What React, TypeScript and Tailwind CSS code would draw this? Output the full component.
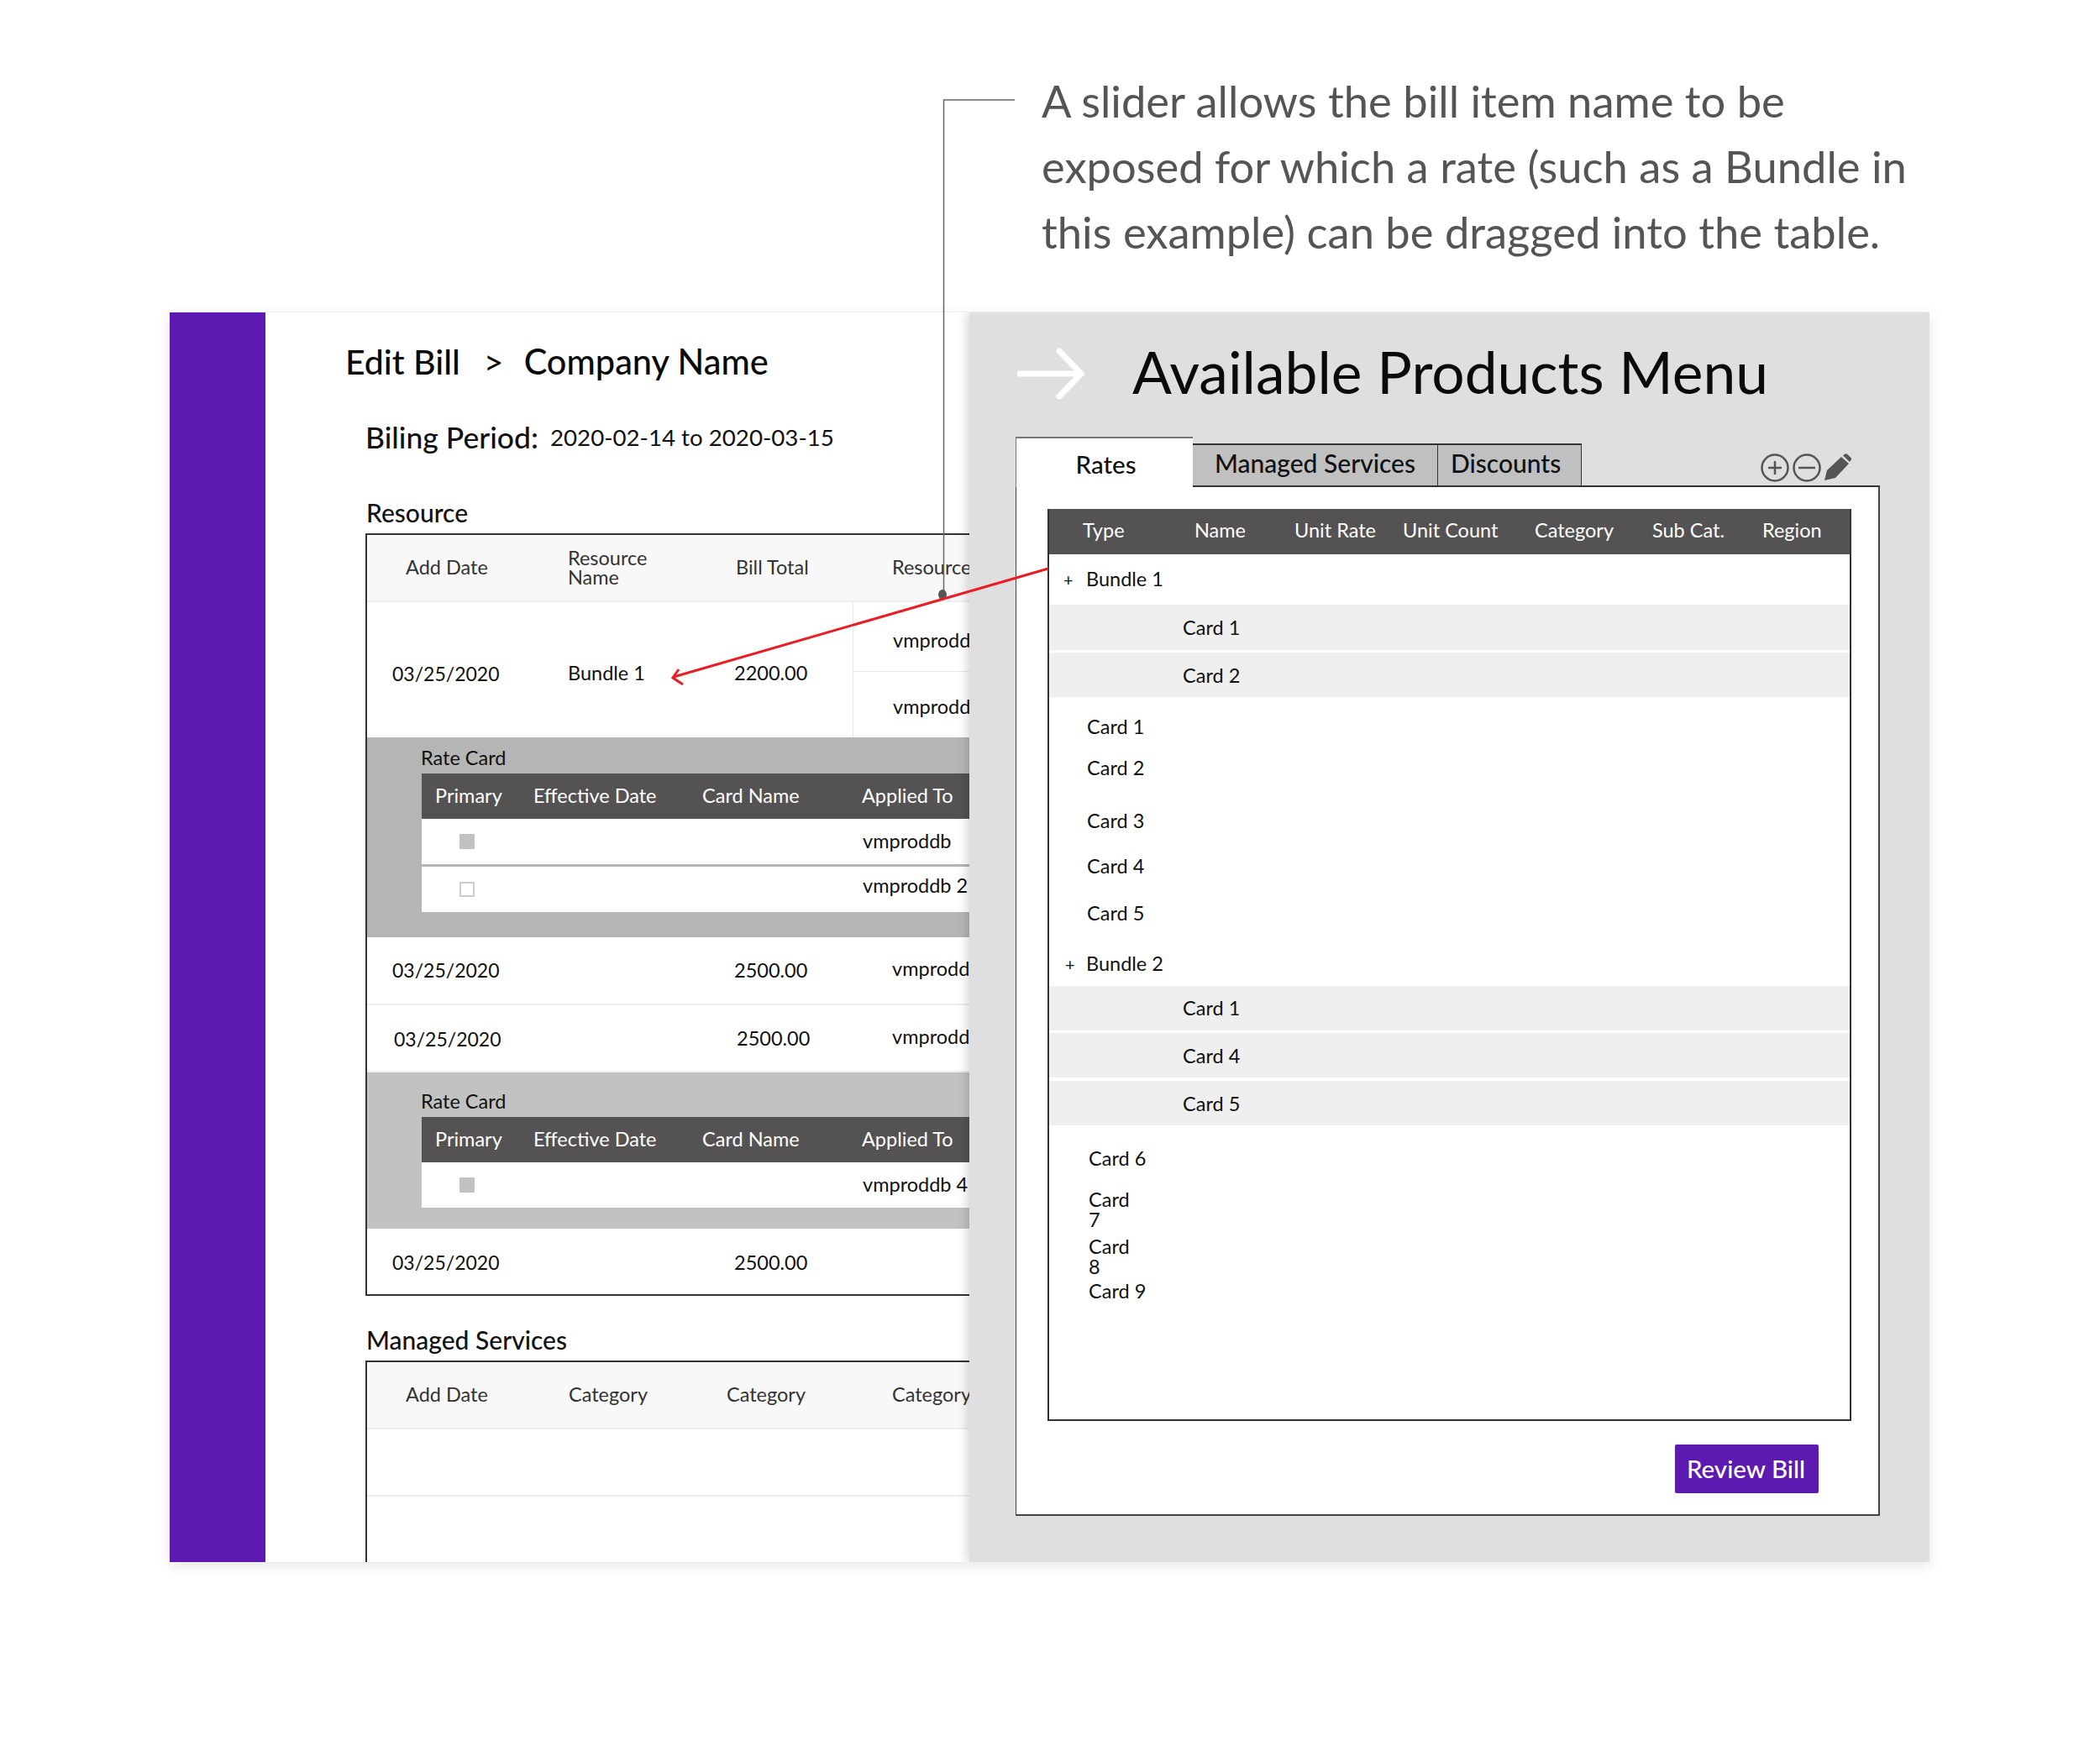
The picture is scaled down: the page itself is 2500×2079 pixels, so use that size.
const FONT = "font-['Lato','Liberation_Sans',sans-serif]";

const BillRow = ({ date, total, res, shift }: { date: string; total: string; res?: string; shift?: boolean }) => (
  <div className={`grid ${shift ? 'h-[80px]' : 'h-[81px]'} grid-cols-[239px_198px_141px_1fr] items-center border-b-2 border-[#eeeeee] text-[23px] text-[#111]`}>
    <div className={shift ? 'pl-[32px] pt-[2px]' : 'pl-[30px]'}>{date}</div>
    <div />
    <div className={`text-[23.5px] ${shift ? 'pl-[3px] pt-[2px]' : ''}`}>{total}</div>
    <div className={`whitespace-nowrap pl-[47px] text-[23.5px] ${shift ? 'pb-[2px]' : 'pb-[4px]'}`}>{res}</div>
  </div>
);

const RateCard = ({ bg, rows, pad, label }: { bg: string; rows: { label: string; checked: boolean }[]; pad: string; label: string }) => (
  <div className={`${bg} ${pad} pl-[65px]`}>
    <div className={`-ml-[1px] text-[23.5px] leading-[26px] text-[#111] ${label}`}>Rate Card</div>
    <div className="grid h-[54px] grid-cols-[133px_201px_190px_1fr] items-center bg-[#545252] text-[23.5px] text-white">
      <div className="pl-[16px]">Primary</div>
      <div>Effective Date</div>
      <div>Card Name</div>
      <div className="whitespace-nowrap">Applied To</div>
    </div>
    {rows.map((r, i) => (
      <div key={r.label} className={`grid h-[54px] grid-cols-[524px_1fr] items-center bg-white text-[23.5px] text-[#111] ${i > 0 ? 'mt-[3px]' : ''}`}>
        <div className="pl-[45px]">
          <div className={`h-[18px] w-[18px] ${r.checked ? 'bg-[#c2c2c2]' : 'border-2 border-[#cccccc] bg-white'}`} />
        </div>
        <div className={`whitespace-nowrap pl-[1px] ${i > 0 ? 'pb-[8px]' : ''}`}>{r.label}</div>
      </div>
    ))}
  </div>
);

const GrayRow = ({ label, h, className }: { label: string; h: string; className?: string }) => (
  <div className={`flex ${h} items-center bg-[#efefef] pl-[159px] text-[23.5px] text-[#111] ${className || ''}`}>{label}</div>
);

const ListItem = ({ label, className }: { label: string; className: string }) => (
  <div className={`pl-[45px] text-[23.5px] leading-[26px] text-[#111] ${className}`}>{label}</div>
);

const App = () => {
  return (
    <div className={`relative h-[2079px] w-[2500px] overflow-hidden bg-white ${FONT}`}>
      <div className="whitespace-nowrap pl-[1240px] pt-[81px] text-[52.5px] font-normal leading-[78px] text-[#555]">
        <div>A slider allows the bill item name to be</div>
        <div>exposed for which a rate (such as a Bundle in</div>
        <div>this example) can be dragged into the table.</div>
      </div>

      <div className="relative ml-[202px] mt-[56px] flex h-[1489px] w-[2095px] overflow-hidden border-t border-[#eeeeee] bg-white shadow-[0_4px_14px_rgba(0,0,0,0.1)]">
        <div className="w-[114px] shrink-0 bg-[#5d1ab0]" />

        <div className="w-[1400px] shrink-0 pl-[119px]">
          <div className="-ml-[24px] flex h-[117px] items-center whitespace-nowrap text-[41px] font-medium text-[#0a0a0a]">
            <span>Edit Bill</span>
            <span className="ml-[28px] mr-[24px] font-normal">&gt;</span>
            <span className="text-[41.5px]">Company Name</span>
          </div>
          <div className="mt-[12px] flex h-[40px] items-center whitespace-nowrap text-[#111]">
            <span className="text-[35.5px] font-medium">Biling Period:</span>
            <span className="ml-[14px] text-[27.7px]">2020-02-14 to 2020-03-15</span>
          </div>

          <div className="mt-[52px] pl-[1px] text-[30px] font-medium leading-[34px] text-[#111]">Resource</div>
          <div className="mt-[8px] border-2 border-r-0 border-[#333]">
            <div className="grid h-[80px] grid-cols-[239px_198px_141px_1fr] items-center border-b-2 border-[#eeeeee] bg-[#f8f8f8] text-[23.5px] text-[#333]">
              <div className="pl-[46px]">Add Date</div>
              <div className="leading-[23px]">Resource<br />Name</div>
              <div className="pl-[2px]">Bill Total</div>
              <div className="whitespace-nowrap pl-[47px]">Resource</div>
            </div>
            <div className="grid h-[161px] grid-cols-[239px_198px_141px_1fr] items-center text-[23.5px] text-[#111]">
              <div className="pl-[30px] pt-[9px] text-[23px]">03/25/2020</div>
              <div className="pt-[9px]">Bundle 1</div>
              <div className="pt-[9px]">2200.00</div>
              <div className="flex h-full flex-col border-l border-[#e8e8e8]">
                <div className="flex h-[83px] items-center border-b border-[#e8e8e8] pl-[47px] pt-[9px]">vmprodd</div>
                <div className="flex flex-1 items-center pl-[47px] pt-[6px]">vmprodd</div>
              </div>
            </div>
            <RateCard
              bg="bg-[#b5b5b5]"
              pad="h-[238px]"
              label="h-[43px] pt-[11px]"
              rows={[
                { label: 'vmproddb', checked: true },
                { label: 'vmproddb 2', checked: false },
              ]}
            />
            <BillRow date="03/25/2020" total="2500.00" res="vmprodd" />
            <BillRow date="03/25/2020" total="2500.00" res="vmprodd" shift />
            <RateCard bg="bg-[#c2c2c2]" pad="h-[186px]" label="h-[53px] pt-[21px]" rows={[{ label: 'vmproddb 4', checked: true }]} />
            <div className="grid h-[78px] grid-cols-[239px_198px_141px_1fr] items-center pt-[3px] text-[23px] text-[#111]">
              <div className="pl-[30px]">03/25/2020</div>
              <div />
              <div className="text-[23.5px]">2500.00</div>
            </div>
          </div>

          <div className="mt-[35px] pl-[1px] text-[30px] font-medium leading-[34px] text-[#111]">Managed Services</div>
          <div className="mt-[8px] h-[300px] border-2 border-b-0 border-r-0 border-[#333]">
            <div className="grid h-[80px] grid-cols-[240px_188px_150px_1fr] items-center border-b-2 border-[#eeeeee] bg-[#f8f8f8] text-[23.5px] text-[#333]">
              <div className="pl-[46px]">Add Date</div>
              <div>Category</div>
              <div>Category</div>
              <div className="pl-[47px]">Category</div>
            </div>
            <div className="h-[80px] border-b-2 border-[#eeeeee]" />
          </div>
        </div>

        <div className="absolute bottom-0 left-[952px] top-0 w-[1143px] bg-[#dfdfdf] shadow-[-4px_0_10px_rgba(0,0,0,0.14)]">
          <div className="flex h-[148px] items-start pl-[57px] pt-[35px]">
            <svg width="80" height="66" viewBox="0 0 80 66" fill="none" stroke="#ffffff" strokeWidth="7" strokeLinecap="round" className="mt-[5px]">
              <path d="M2 33H74" />
              <path d="M50 6L76 33L50 60" />
            </svg>
            <div className="ml-[57px] whitespace-nowrap text-[69.5px] leading-[70px] text-[#0a0a0a]">Available Products Menu</div>
          </div>

          <div className="flex h-[60px] items-end pl-[55px] pr-[59px]">
            <div className="flex h-[60px] w-[211px] items-center justify-center border-l border-t-2 border-[#777] bg-white pl-[3px] pt-[5px] text-[29.5px] font-medium text-[#111]">Rates</div>
            <div className="flex h-[52px] w-[291px] items-center border-y-2 border-[#333] bg-[#c0c0c0] pb-[5px] pl-[26px] text-[30px] font-medium text-[#111]">Managed Services</div>
            <div className="flex h-[52px] w-[172px] items-center border-x border-y-2 border-[#333] bg-[#c0c0c0] pb-[5px] pl-[15px] text-[30px] font-medium text-[#111]">Discounts</div>
            <div className="flex h-[52px] flex-1 items-start justify-end gap-[4px] border-b-2 border-[#333] pr-[33px] pt-[12px]">
              <svg width="34" height="34" viewBox="0 0 34 34" fill="none" stroke="#555" strokeWidth="2.5">
                <circle cx="17" cy="17" r="15.5" />
                <path d="M17 9V25M9 17H25" />
              </svg>
              <svg width="34" height="34" viewBox="0 0 34 34" fill="none" stroke="#555" strokeWidth="2.5">
                <circle cx="17" cy="17" r="15.5" />
                <path d="M7 17H27" />
              </svg>
              <svg width="33" height="33" viewBox="0 0 33 33" fill="#555">
                <path d="M0 32L3 20L20 4L29 12L13 29Z" />
                <path d="M22 2.5L24 .8Q25.5 -.4 27 .8L31.5 5Q32.8 6.5 31.5 8L30 10Z" />
              </svg>
            </div>
          </div>

          <div className="ml-[55px] h-[1225px] w-[1029px] border-b-2 border-l border-r-2 border-[#444] bg-white pt-[26px]">
            <div className="relative ml-[37px] h-[1086px] w-[957px] border-2 border-t-0 border-[#333]">
              <div className="grid h-[54px] grid-cols-[133px_119px_129px_157px_140px_131px_1fr] items-center whitespace-nowrap bg-[#545252] pb-[2px] pl-[40px] text-[23.5px] text-white">
                <div>Type</div>
                <div>Name</div>
                <div>Unit Rate</div>
                <div>Unit Count</div>
                <div>Category</div>
                <div>Sub Cat.</div>
                <div>Region</div>
              </div>

              <div className="flex h-[60px] items-center pl-[17px] text-[23.5px] text-[#111]">
                <span className="w-[27px] text-[20px] leading-none">+</span>
                <span>Bundle 1</span>
              </div>
              <GrayRow label="Card 1" h="h-[54px]" className="pt-[2px]" />
              <GrayRow label="Card 2" h="h-[53px]" className="mt-[3px] pt-[2px]" />
              <ListItem label="Card 1" className="mt-[22px]" />
              <ListItem label="Card 2" className="mt-[23px]" />
              <ListItem label="Card 3" className="mt-[37px]" />
              <ListItem label="Card 4" className="mt-[28px]" />
              <ListItem label="Card 5" className="mt-[30px]" />
              <div className="mt-[35px] flex h-[26px] items-center pl-[19px] text-[23.5px] text-[#111]">
                <span className="w-[25px] text-[20px] leading-none">+</span>
                <span>Bundle 2</span>
              </div>
              <GrayRow label="Card 1" h="h-[53px]" className="mt-[13px]" />
              <GrayRow label="Card 4" h="h-[53px]" className="mt-[3px] pt-[3px]" />
              <GrayRow label="Card 5" h="h-[53px]" className="mt-[4px] pt-[2px]" />
              <ListItem label="Card 6" className="mt-[26px] pl-[47px]" />
              <div className="mt-[25px] w-[100px] pl-[47px] text-[23.5px] leading-[23.5px] text-[#111]">Card<br />7</div>
              <div className="mt-[9px] w-[100px] pl-[47px] text-[23.5px] leading-[23.5px] text-[#111]">Card<br />8</div>
              <ListItem label="Card 9" className="mt-[4px] pl-[47px]" />
            </div>
            <div className="mt-[28px] flex justify-end pr-[71px]">
              <button className="h-[58px] w-[171px] rounded-[2px] bg-[#5d1ab0] pr-[2px] text-[29.5px] font-medium text-white">Review Bill</button>
            </div>
          </div>
        </div>
      </div>

      {/* callout line and drag arrow sit over both panels */}
      <svg className="pointer-events-none absolute left-0 top-0" width="2500" height="2079" fill="none">
        <path d="M1208 119H1123.5V707" stroke="#666" strokeWidth="1.5" />
        <ellipse cx="1122" cy="708" rx="5" ry="6" fill="#555" />
        <path d="M1248 677L802 806" stroke="#e81e25" strokeWidth="3" />
        <path d="M808 797L801 807L813 815" stroke="#e81e25" strokeWidth="3" />
      </svg>
    </div>
  );
};

export default App;
